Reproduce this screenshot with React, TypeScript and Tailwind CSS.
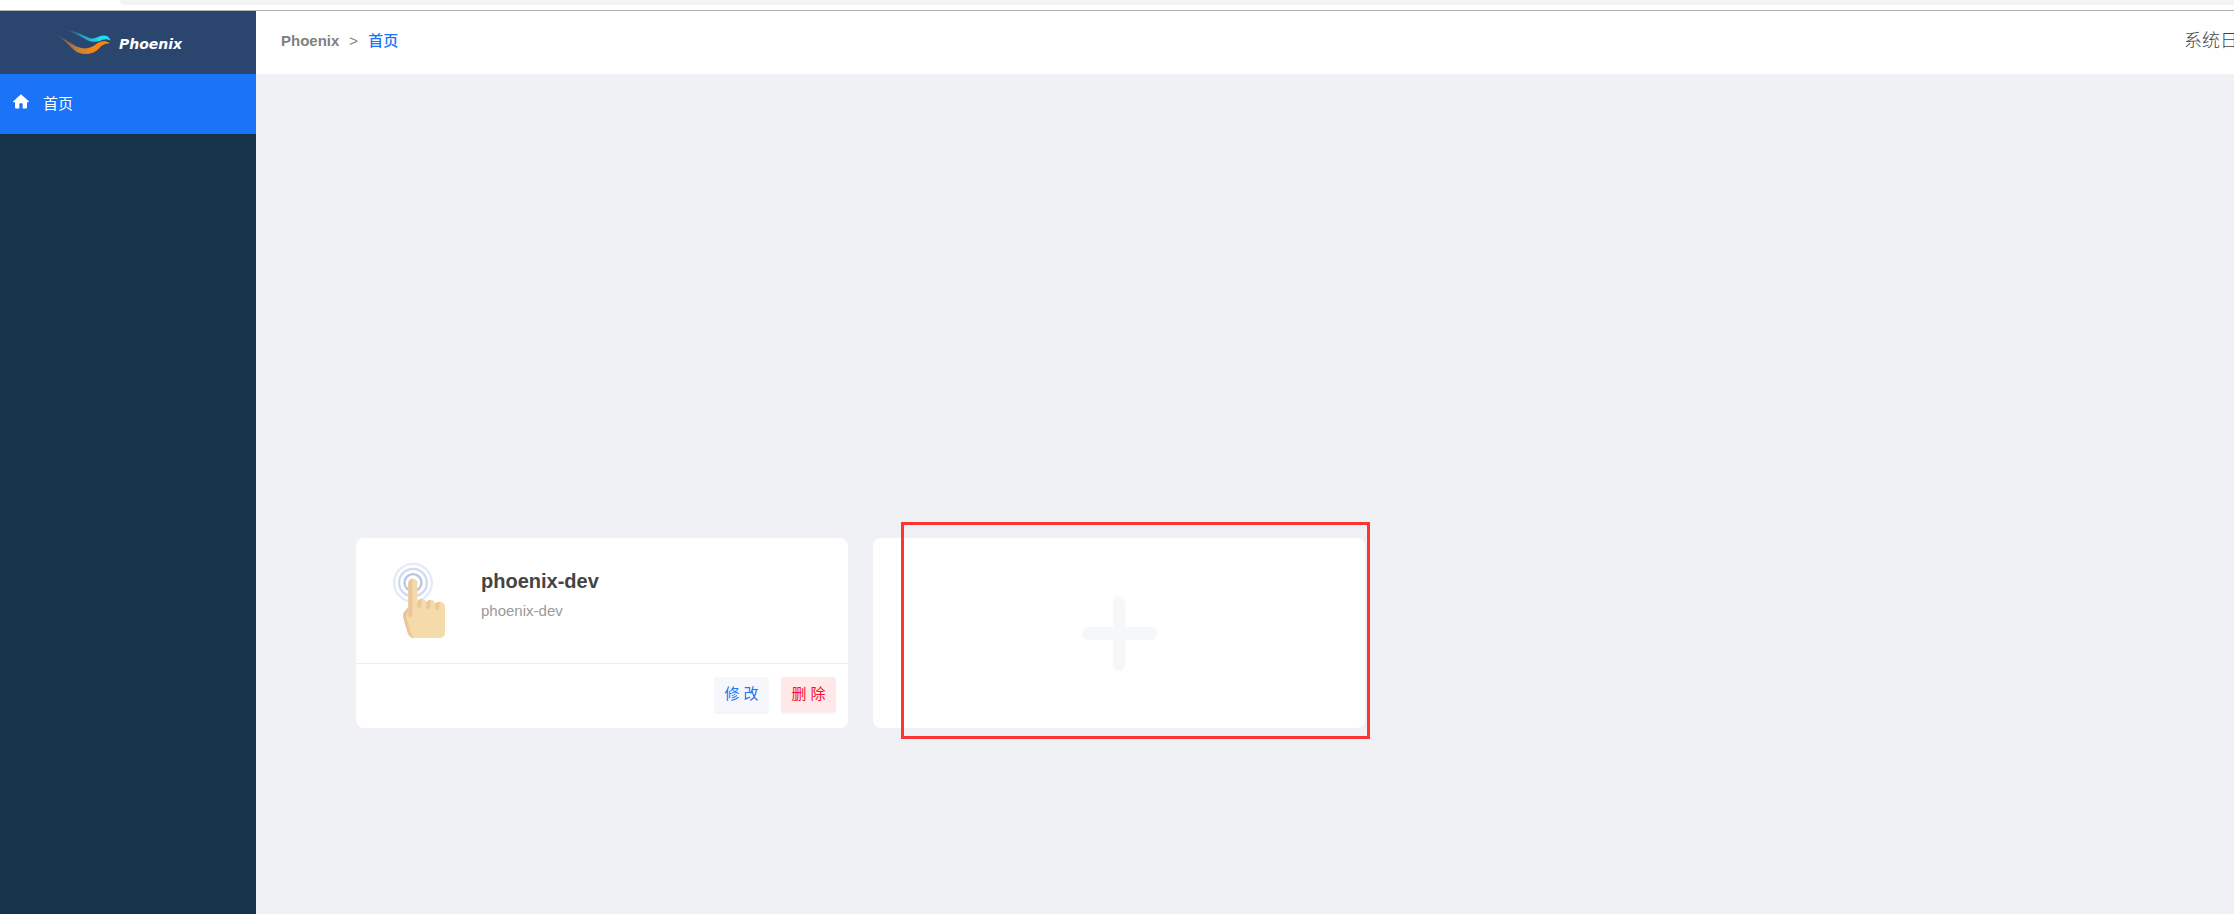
import React from "react";

const FONT = "font-['Liberation_Sans','Noto_Sans_CJK_SC',sans-serif]";

function BrandMark() {
  return (
    <svg viewBox="165 85 175 82" className="h-[27px] w-[58px]" aria-hidden="true">
      <defs>
        <linearGradient id="wingTop" x1="0" x2="1" y1="0" y2="0">
          <stop offset="0" stopColor="#22d3ee" stopOpacity="0.1" />
          <stop offset="0.55" stopColor="#22d3ee" stopOpacity="0.85" />
          <stop offset="0.75" stopColor="#1fdcf2" />
        </linearGradient>
        <linearGradient id="wingBottom" x1="0" x2="1" y1="0" y2="0">
          <stop offset="0" stopColor="#f58a1f" stopOpacity="0.1" />
          <stop offset="0.4" stopColor="#e08a2c" stopOpacity="0.85" />
          <stop offset="0.75" stopColor="#ff850f" />
        </linearGradient>
      </defs>
      <path fill="url(#wingTop)" d="M200 89C228 93 250 104 268 112C288 119 294 106 312 105C323 105 330 111 334 120C325 116 318 114 310 118C298 124 284 126 270 122C250 114 232 99 200 89Z" />
      <path fill="url(#wingBottom)" d="M166 104C196 113 214 132 234 140C258 149 278 142 291 130C302 120 320 120 331 128C314 129 307 134 298 144C282 161 258 165 238 158C214 149 204 122 166 104Z" />
    </svg>
  );
}

function HomeIcon() {
  return (
    <svg viewBox="0 0 48 44" className="h-[15px] w-4 fill-white" aria-hidden="true">
      <path d="M24 0L48 22Q48 24 46 24H42V40Q42 43 39 43H29V29Q29 27 27 27H21Q19 27 19 29V43H9Q6 43 6 40V24H2Q0 24 0 22Z" />
    </svg>
  );
}

function TapIcon() {
  return (
    <svg viewBox="156 126 162 231" className="h-[77px] w-[54px]" aria-hidden="true">
      <g fill="none">
        <circle cx="219" cy="188" r="56.5" stroke="#e4eaf7" strokeWidth="7" />
        <circle cx="219" cy="188" r="41.5" stroke="#d0daf0" strokeWidth="7" />
        <circle cx="219" cy="188" r="25.5" stroke="#b9c5de" strokeWidth="7" />
      </g>
      <path fill="#f5daaa" d="M205 190Q205 176 219 176Q232 176 232 190V246Q236 237 246 237Q256 237 259 247Q263 240 272 240Q282 240 286 250Q291 245 299 245Q315 246 315 262V336Q315 354 297 354H222Q208 354 203 338L190 294Q187 280 195 273L205 262Z" />
      <path fill="#ebc699" d="M205 190Q205 177 219 176Q217 180 217 190V285Q217 292 211 292Q205 292 205 285V277Q197 284 200 295L213 340Q217 352 226 354H222Q208 354 203 338L190 294Q187 280 195 273L205 262Z" />
      <path fill="#ebc699" d="M232 246Q236 237 246 237Q244 242 244 250V257Q243 264 237 264Q232 264 232 258ZM259 247Q263 240 272 240Q271 245 271 252V261Q270 267 265 267Q259 267 259 261ZM286 250Q291 245 299 245Q298 250 298 256V264Q297 270 292 270Q286 270 286 264Z" />
    </svg>
  );
}

function PlusIcon() {
  return (
    <svg viewBox="0 0 75 75" className="size-[75px] fill-[#f6f7f9]" aria-hidden="true">
      <rect x="31" y="0" width="12" height="75" rx="6" />
      <rect x="0" y="31" width="75" height="13" rx="6.5" />
    </svg>
  );
}

const actionClass =
  "h-[35px] w-[55px] cursor-pointer rounded-[3px] pb-[2px] text-[15px] leading-none shadow-[0_2px_0_rgba(0,0,0,0.045)]";

function ProjectCard({ name, description }: { name: string; description: string }) {
  return (
    <article className="flex h-[190px] w-[492px] flex-col rounded-lg bg-white">
      <div className="flex h-[126px] items-start border-b border-[#ebecf0] pt-6 pl-9">
        <TapIcon />
        <div className="ml-[35px] pt-1">
          <h2 className="text-xl leading-[30px] font-bold text-[#444]">{name}</h2>
          <p className="text-[15px] leading-[30px] text-[#999]">{description}</p>
        </div>
      </div>
      <div className="flex justify-end gap-3 px-3 pt-[13px]">
        <button type="button" className={`${actionClass} bg-[#f5f7fa] text-[#1b73f8]`}>
          修 改
        </button>
        <button type="button" className={`${actionClass} bg-[#ffe8e8] text-[#f5102c]`}>
          删 除
        </button>
      </div>
    </article>
  );
}

export default function App() {
  return (
    <div className={`flex min-h-screen flex-col overflow-hidden bg-white ${FONT}`}>
      <div className="h-[11px] border-b border-[#b3b3b3] pl-[120px]">
        <div className="h-[5px] rounded-bl-xl bg-[#f1f3f4]" />
      </div>
      <div className="flex flex-1">
        <aside className="w-64 shrink-0 bg-[#16344a]">
          <a href="#" className="flex h-[63px] items-center bg-[#2a466f] pl-[55px]">
            <BrandMark />
            <span className="ml-[6px] pt-1 font-['DejaVu_Sans',sans-serif] text-[14px] font-bold text-white italic">
              Phoenix
            </span>
          </a>
          <nav>
            <a href="#" className="flex h-[60px] items-center bg-[#1b73f8] pl-[13px] text-[15px] text-white">
              <span className="pb-[6px]">
                <HomeIcon />
              </span>
              <span className="ml-[14px]">首页</span>
            </a>
          </nav>
        </aside>
        <div className="flex min-w-0 flex-1 flex-col">
          <header className="flex h-[63px] items-center justify-between bg-white pb-[2px] pl-[25px]">
            <nav aria-label="breadcrumb" className="flex items-center text-[15px] text-[#808080]">
              <a href="#" className="font-bold">
                Phoenix
              </a>
              <span className="mx-[10px]">&gt;</span>
              <a href="#" className="font-medium text-[#1b73f8]">
                首页
              </a>
            </nav>
            <button type="button" className="w-[50px] overflow-hidden text-left text-[18px] font-light whitespace-nowrap text-[#444]">
              系统日
            </button>
          </header>
          <main className="flex-1 bg-[#f0f1f5] px-[100px] pt-[464px] pb-10">
            <div className="flex flex-wrap gap-[25px]">
              <ProjectCard name="phoenix-dev" description="phoenix-dev" />
              <div className="relative">
                <button
                  type="button"
                  aria-label="add"
                  className="flex h-[190px] w-[492px] cursor-pointer items-center justify-center rounded-lg bg-white"
                >
                  <PlusIcon />
                </button>
                <div className="pointer-events-none absolute -top-4 -right-[5px] -bottom-[11px] left-7 border-3 border-[#fb3636]" />
              </div>
            </div>
          </main>
        </div>
      </div>
    </div>
  );
}
